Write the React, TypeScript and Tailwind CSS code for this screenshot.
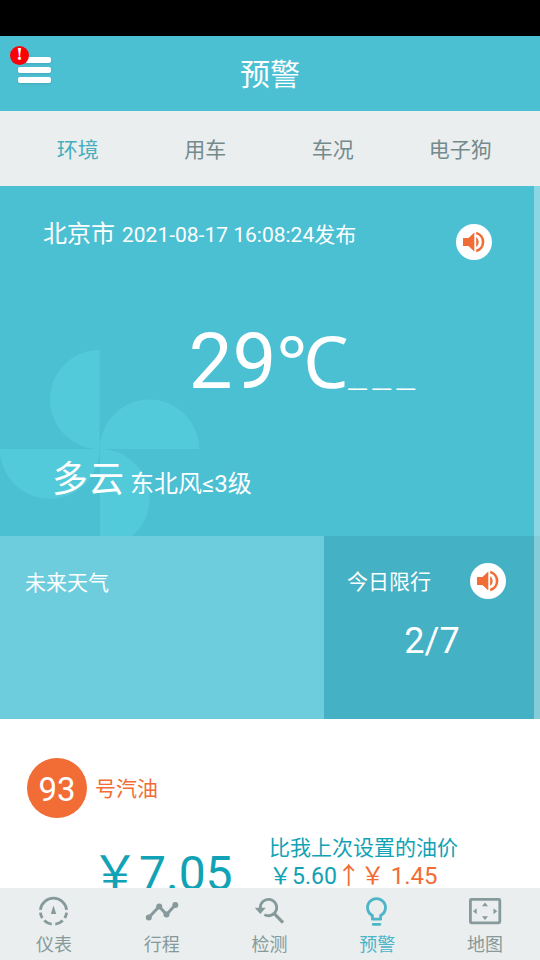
import type { ReactNode } from "react";
import { clsx } from "clsx";

const tabs = ["环境", "用车", "车况", "电子狗"];

type NavItem = {
    label: string;
    icon: ReactNode;
    active?: boolean;
};

const navItems: NavItem[] = [
    { label: "仪表", icon: <GaugeIcon /> },
    { label: "行程", icon: <TripIcon /> },
    { label: "检测", icon: <CheckIcon /> },
    { label: "预警", icon: <BulbIcon />, active: true },
    { label: "地图", icon: <MapIcon /> },
];

function GaugeIcon() {
    return (
        <svg viewBox="0 0 36 32" className="h-8 w-9" fill="none" stroke="currentColor" strokeWidth="2.8">
            <path d="M4.4 14.8A13.2 13.2 0 0 1 30.6 14.8" />
            <path d="M4.4 17.6A13.2 13.2 0 0 0 6.3 23" />
            <path d="M8.2 25.5A13.2 13.2 0 0 0 15.7 29.1" />
            <path d="M19.3 29.1A13.2 13.2 0 0 0 26.8 25.5" />
            <path d="M28.7 23A13.2 13.2 0 0 0 30.6 17.6" />
            <path d="M17.5 10.5L20.2 19H14.8Z" fill="currentColor" stroke="none" />
        </svg>
    );
}

function TripIcon() {
    return (
        <svg viewBox="0 0 36 32" className="h-8 w-9" fill="currentColor">
            <path d="M4.8 22.5L15.2 11.5L22.5 19.5L31.3 10" fill="none" stroke="currentColor" strokeWidth="3" />
            <circle cx="4.8" cy="22.5" r="3" />
            <circle cx="15.2" cy="11.5" r="3" />
            <circle cx="22.5" cy="19.5" r="3" />
            <circle cx="31.3" cy="10" r="3" />
        </svg>
    );
}

function CheckIcon() {
    return (
        <svg viewBox="0 0 36 32" className="h-8 w-9" fill="none" stroke="currentColor" strokeWidth="2.8">
            <path d="M9.3 13A8.2 8.2 0 1 1 13.4 19.6" />
            <path d="M23 18.3L32 27.6" strokeWidth="3.2" />
            <path d="M3.7 12.8H14.8L9.3 19Z" fill="currentColor" stroke="none" />
        </svg>
    );
}

function BulbIcon() {
    return (
        <svg viewBox="0 0 36 32" className="h-8 w-9" fill="none" stroke="currentColor" strokeWidth="2.8">
            <path d="M13.4 24.2V20.6A9 9 0 1 1 21.6 20.6V24.2Z" strokeLinejoin="round" />
            <path d="M14.2 29.4H20.8" strokeLinecap="round" />
        </svg>
    );
}

function MapIcon() {
    return (
        <svg viewBox="0 0 36 32" className="h-8 w-9" fill="currentColor">
            <rect x="3.4" y="4.4" width="29.4" height="23.4" rx="1" fill="none" stroke="currentColor" strokeWidth="2.8" />
            <path d="M18 7.5L21 11.2H15Z" />
            <path d="M18 25L21 21.3H15Z" />
            <path d="M6 16.3L9.7 13.3V19.3Z" />
            <path d="M30.2 16.3L26.5 13.3V19.3Z" />
        </svg>
    );
}

function SpeakerButton({ label }: { label: string }) {
    return (
        <button type="button" aria-label={label} className="h-9 w-9 shrink-0 rounded-full bg-white text-[#f26d35]">
            <svg viewBox="0 0 36 36" className="h-9 w-9" fill="currentColor">
                <path d="M7 14H12.5L18.3 8.6V27.4L12.5 22H7Z" />
                <path d="M20.2 13A6.2 6.2 0 0 1 20.2 23Z" />
                <path d="M20.2 9.1A9.2 9.2 0 0 1 20.2 26.9" fill="none" stroke="currentColor" strokeWidth="2.6" />
            </svg>
        </button>
    );
}

function Header() {
    return (
        <header className="grid h-[75px] shrink-0 grid-cols-[1fr_auto_1fr] items-center bg-[#4cc0d3] px-4.5 text-white">
            <button type="button" aria-label="菜单" className="relative flex w-[33px] flex-col gap-1 pb-2">
                <span className="h-1.5 rounded-xs bg-white shadow-sm" />
                <span className="h-1.5 rounded-xs bg-white shadow-sm" />
                <span className="h-1.5 rounded-xs bg-white shadow-sm" />
                <span className="absolute -top-[11px] -left-2 flex h-[19px] w-[19px] items-center justify-center rounded-full bg-[#fb0007] font-['DejaVu_Serif',serif] text-base font-bold">
                    !
                </span>
            </button>
            <h1 className="pt-0.5 text-3xl">预警</h1>
        </header>
    );
}

function WeatherPanel() {
    return (
        <section className="relative flex h-[350px] shrink-0 flex-col overflow-hidden bg-[#4cc0d3] text-white">
            {/* fan */}
            <svg viewBox="0 0 200 200" className="absolute top-[163px] left-0 h-[200px] w-[200px]" fill="#52cada">
                <path d="M99.5 1A49.5 49.5 0 0 0 99.5 100Z" />
                <path d="M100 100A49.5 49.5 0 0 1 199 100Z" />
                <path d="M0 100A49.5 49.5 0 0 0 99.5 100Z" />
                <path d="M100 100A49.5 49.5 0 0 1 100 199Z" />
            </svg>

            <div className="flex items-start justify-between pt-7 pr-12 pl-[43px]">
                <p className="flex items-baseline gap-[7px] pt-1 whitespace-nowrap">
                    <span className="text-2xl">北京市</span>
                    <span className="text-[21px]">2021-08-17 16:08:24发布</span>
                </p>
                <div className="pt-2.5">
                    <SpeakerButton label="播报天气" />
                </div>
            </div>

            <p className="relative flex grow items-center justify-center pb-1 pl-16">
                <span className="flex items-baseline">
                    <span className="text-[78px] leading-none">29</span>
                    <span className="font-['Liberation_Sans','Noto_Sans',sans-serif] text-[72px] leading-none">℃</span>
                    <span className="text-[21px]">__ __ __</span>
                </span>
            </p>

            <p className="relative flex items-baseline gap-1.5 pb-9 pl-[52px]">
                <span className="text-4xl">多云</span>
                <span className="text-2xl">东北风≤3级</span>
            </p>
        </section>
    );
}

function OilPanel() {
    return (
        <section className="shrink-0 bg-white px-[27px] pt-[39px] text-[#12a2b5]">
            <h2 className="flex items-center gap-2 text-[#f26d35]">
                <span className="flex h-15 w-15 items-center justify-center rounded-full bg-[#f26d35] pt-1 text-[33px] text-white">
                    93
                </span>
                <span className="pt-1 text-[21px]">号汽油</span>
            </h2>
            <div className="flex items-start pt-3 pl-16">
                <p className="w-[178px] pt-5 text-5xl">￥7.05</p>
                <div className="whitespace-nowrap">
                    <p className="text-[21px] leading-9">比我上次设置的油价</p>
                    <p className="text-[23px] leading-5">
                        ￥5.60<span className="text-2xl leading-5 text-[#f26d35]">↑￥ 1.45</span>
                    </p>
                </div>
            </div>
        </section>
    );
}

export default function App() {
    return (
        <div className="flex h-screen flex-col bg-white font-[Roboto,'Noto_Sans_CJK_SC',sans-serif]">
            <div className="h-9 shrink-0 bg-black" />
            <Header />

            {/* TABS */}
            <nav className="grid h-[75px] shrink-0 grid-cols-4 bg-[#eaeeef] pt-1 pr-4 pl-3.5 text-[21px]">
                {tabs.map((tab, i) => (
                    <button key={tab} type="button" className={i === 0 ? "text-[#45aebd]" : "text-[#748a8c]"}>
                        {tab}
                    </button>
                ))}
            </nav>

            {/* CONTENT */}
            <main className="relative flex min-h-0 grow flex-col overflow-hidden">
                <WeatherPanel />
                <div className="grid h-[183px] shrink-0 grid-cols-[3fr_2fr] text-white">
                    <section className="bg-[#6dcddd] px-[25px] pt-8">
                        <h2 className="text-[21px]">未来天气</h2>
                    </section>
                    <section className="bg-[#44b1c4] pt-[27px]">
                        <div className="flex items-center justify-between pr-[34px] pl-[23px]">
                            <h2 className="pt-1 text-[21px]">今日限行</h2>
                            <SpeakerButton label="播报限行" />
                        </div>
                        <p className="pt-[22px] text-center text-4xl">2/7</p>
                    </section>
                </div>
                <OilPanel />
                <div className="absolute top-0 right-0 h-full w-1.5 bg-white/35" />
            </main>

            {/* BOTTOM NAV */}
            <nav className="grid h-18 shrink-0 grid-cols-5 bg-[#eaeeef] pr-px text-lg">
                {navItems.map((item) => (
                    <a
                        key={item.label}
                        href="#"
                        className={clsx(
                            "flex flex-col items-center gap-1 pt-[7px] leading-7",
                            item.active ? "text-[#4cb5c8]" : "text-[#869a9b]",
                        )}
                    >
                        {item.icon}
                        {item.label}
                    </a>
                ))}
            </nav>
        </div>
    );
}
